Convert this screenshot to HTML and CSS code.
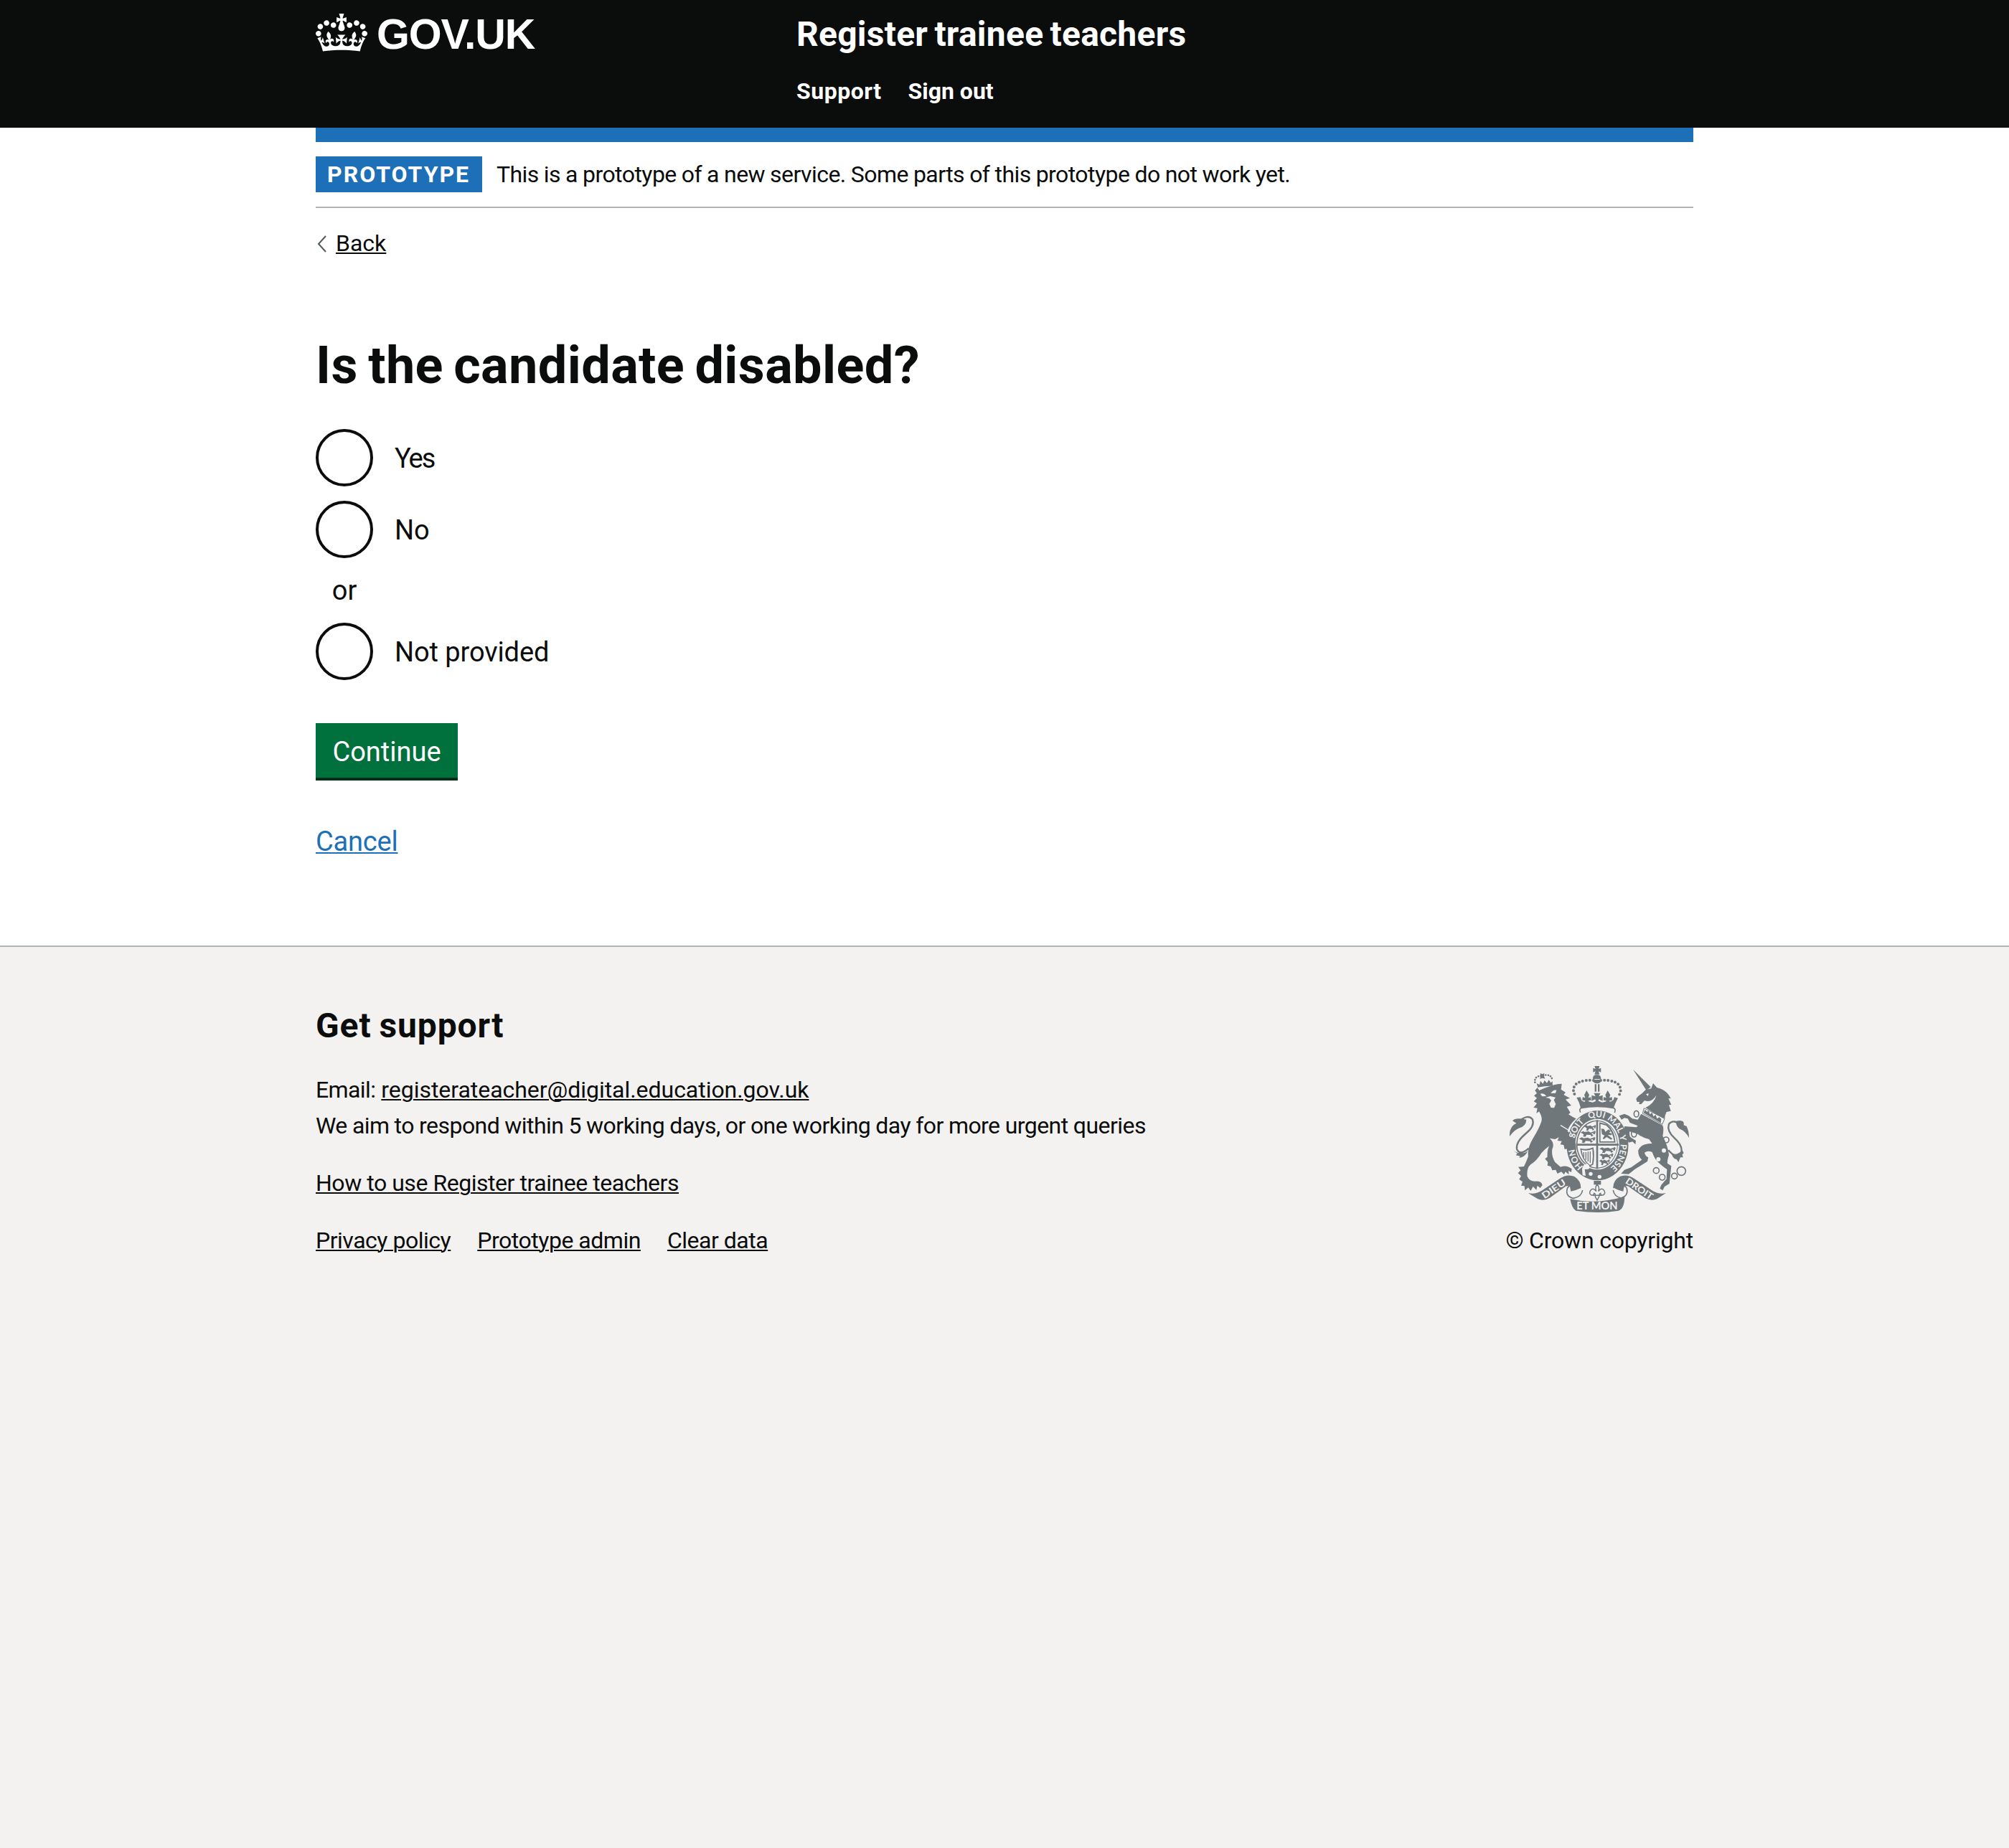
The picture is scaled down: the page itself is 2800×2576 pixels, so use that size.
FILE: index.html
```html
<!DOCTYPE html>
<html lang="en">
<head>
<meta charset="utf-8">
<title>Is the candidate disabled? - Register trainee teachers</title>
<link rel="stylesheet" href="styles.css">
</head>
<body>
<header class="header">
  <div class="container header-row">
    <a class="logo" href="#">
      <svg class="crown" viewBox="0 0 132 97" aria-hidden="true"><path fill="currentColor" d="M25 30.2c3.5 1.5 7.7-.2 9.1-3.7 1.5-3.6-.2-7.8-3.9-9.2-3.6-1.4-7.6.3-9.1 3.9-1.4 3.5.3 7.5 3.9 9zM9 39.5c3.6 1.5 7.8-.2 9.2-3.7 1.5-3.6-.2-7.8-3.9-9.1-3.6-1.5-7.6.2-9.1 3.8-1.4 3.5.3 7.5 3.8 9zM4.4 57.2c3.5 1.5 7.7-.2 9.1-3.8 1.5-3.6-.2-7.7-3.9-9.1-3.5-1.5-7.6.3-9.1 3.8-1.4 3.5.3 7.6 3.9 9.1zm38.3-21.4c3.5 1.5 7.7-.2 9.1-3.8 1.5-3.6-.2-7.7-3.9-9.1-3.6-1.5-7.6.3-9.1 3.8-1.3 3.6.4 7.7 3.9 9.1zm64.4-5.6c-3.6 1.5-7.8-.2-9.1-3.7-1.5-3.6.2-7.8 3.8-9.2 3.6-1.4 7.7.3 9.2 3.9 1.3 3.5-.4 7.5-3.9 9zm15.9 9.3c-3.6 1.5-7.7-.2-9.1-3.7-1.5-3.6.2-7.8 3.7-9.1 3.6-1.5 7.7.2 9.2 3.8 1.5 3.5-.3 7.5-3.8 9zm4.7 17.7c-3.6 1.5-7.8-.2-9.2-3.8-1.5-3.6.2-7.7 3.9-9.1 3.6-1.5 7.7.3 9.2 3.8 1.3 3.5-.4 7.6-3.9 9.1zM89.3 35.8c-3.6 1.5-7.8-.2-9.2-3.8-1.4-3.6.2-7.7 3.9-9.1 3.6-1.5 7.7.3 9.2 3.8 1.4 3.6-.3 7.7-3.9 9.1zM69.7 17.7l8.9 4.7V9.3l-8.9 2.8c-.2-.3-.5-.6-.9-.9L72.4 0H59.6l3.5 11.2c-.3.3-.6.5-.9.9l-8.8-2.8v13.1l8.8-4.7c.3.3.6.7.9.9l-5 15.4v.1c-.2.8-.4 1.6-.4 2.4 0 4.1 3.1 7.5 7 8.1h.2c.3 0 .7.1 1 .1.4 0 .7 0 1-.1h.2c4-.6 7.1-4.1 7.1-8.1 0-.8-.1-1.7-.4-2.4V34l-5.1-15.4c.4-.2.7-.6 1-.9zM66 92.8c16.9 0 32.8 1.1 47.1 3.2 4-16.9 8.9-26.7 14-33.5l-9.6-3.4c1 4.9 1.1 7.2 0 10.2-1.5-1.4-3-4.3-4.2-8.7L108.6 76c2.8-2 5-3.2 7.5-3.3-4.4 9.4-10 11.9-13.6 11.2-4.3-.8-6.3-4.6-5.6-7.9 1-4.7 5.7-5.9 8-.5 4.3-8.7-3-11.4-7.6-8.8 7.1-7.2 7.9-13.5 2.1-21.1-8 6.1-8.1 12.3-4.5 20.8-4.7-5.4-12.1-2.5-9.5 6.2 3.4-5.2 7.9-2 7.2 3.1-.6 4.3-6.4 7.8-13.5 7.2-10.3-.9-10.9-8-11.2-13.8 2.5-.5 7.1 1.8 11 7.3L80.2 60c-4.1 4.4-8 5.3-12.3 5.4 1.4-4.4 8-11.6 8-11.6H55.5s6.4 7.2 7.9 11.6c-4.2-.1-8-1-12.3-5.4l1.4 16.4c3.9-5.5 8.5-7.7 10.9-7.3-.3 5.8-.9 12.8-11.1 13.8-7.2.6-12.9-2.9-13.5-7.2-.7-5 3.8-8.3 7.1-3.1 2.7-8.7-4.6-11.6-9.4-6.2 3.7-8.5 3.6-14.7-4.6-20.8-5.8 7.6-5 13.9 2.2 21.1-4.7-2.6-11.9.1-7.7 8.8 2.3-5.5 7.1-4.2 8.1.5.7 3.3-1.3 7.1-5.7 7.9-3.5.7-9-1.8-13.5-11.2 2.5.1 4.7 1.3 7.5 3.3l-4.7-15.4c-1.2 4.4-2.7 7.2-4.3 8.7-1.1-3-.9-5.3 0-10.2l-9.5 3.4c5 6.9 9.9 16.7 14 33.5 14.8-2.1 30.8-3.2 47.7-3.2z"/></svg>
      <span class="logo-text">GOV.UK</span>
    </a>
    <div class="header-content">
      <a class="service-name" href="#">Register trainee teachers</a>
      <nav class="header-nav"><a class="nav-support" href="#">Support</a><a href="#">Sign out</a></nav>
    </div>
  </div>
</header>

<div class="container">
  <div class="blue-bar"></div>
  <div class="phase-banner">
    <strong class="tag">PROTOTYPE</strong>
    <span class="phase-text">This is a prototype of a new service. Some parts of this prototype do not work yet.</span>
  </div>
  <a class="back" href="#">
    <svg class="chevron" viewBox="0 0 16 24" aria-hidden="true"><path d="M14 1 4 12l10 11" fill="none" stroke="#505a5f" stroke-width="2"/></svg>
    <span class="back-text">Back</span>
  </a>
  <main class="main">
    <h1 class="title">Is the candidate disabled?</h1>
    <div class="radios">
      <label class="radio"><input class="radio-input" type="radio" name="disabled"><span class="label-yes">Yes</span></label>
      <label class="radio"><input class="radio-input" type="radio" name="disabled"><span>No</span></label>
      <div class="divider">or</div>
      <label class="radio"><input class="radio-input" type="radio" name="disabled"><span class="label-none">Not provided</span></label>
    </div>
    <button class="button" type="button">Continue</button>
    <p class="cancel"><a class="cancel-link" href="#">Cancel</a></p>
  </main>
</div>

<footer class="footer">
  <div class="container footer-row">
    <div class="footer-main">
      <h2 class="footer-title">Get support</h2>
      <p><span class="email-label">Email:</span> <a class="email" href="#">registerateacher@digital.education.gov.uk</a></p>
      <p class="footer-text">We aim to respond within 5 working days, or one working day for more urgent queries</p>
      <p class="footer-guide footer-gap"><a href="#">How to use Register trainee teachers</a></p>
      <div class="footer-links footer-gap"><a href="#">Privacy policy</a><a href="#">Prototype admin</a><a href="#">Clear data</a></div>
    </div>
    <div class="footer-meta">
      <svg class="crest" viewBox="72 48 750 612" aria-hidden="true">
        <defs>
          <path id="garter" d="M439 492A97 115 0 0 1 439 262A97 115 0 0 1 439 492"/>
          <path id="lion-passant" d="M0 8l9-6 5 4 12-3 7 5 9-4 1 5-8 3 7 8-7 5-2-7-13-1-4 9-8-2 3-7-4-5zM44 0l5 4-3 12-5-2z"/>
        </defs>
        <g class="ink">
          <!-- imperial crown -->
          <path d="M427 48h21l-4 12 10-4v18l-10-4 4 13h-21l4-13-10 4V56l10 4zM437 85c12 0 17 5 17 17h-34c0-12 5-17 17-17zM418 105h39c-2 10-9 16-19 16s-18-6-20-16zM428 124h7v31h-7zM441 124h7v31h-7zM424 161h28l-7 14 16-5v24l-16-7-4 14h-7l-4-14-15 7v-24l16 5z"/>
          <path d="M394 150l11 19-4 12 11-3 1 13-12 2 4 9h-20l3-9-12-2 1-13 11 3-4-12zM482 150l11 19-4 12 11-3 1 13-12 2 4 9h-20l3-9-12-2 1-13 11 3-4-12z"/>
          <path d="M352 180l16-2 5 14q12 10 28 4l18 4 20-8 20 8 18-4q17 6 29-6l4-12 15 4q-11 19-18 41-68-12-138 0-6-25-17-43z"/>
          <path d="M423 108c-45-3-86 7-84 44q2 15 13 24M453 108c45-3 84 7 83 44q-2 15-13 24" fill="none" stroke="#6f777b" stroke-width="12" stroke-linecap="round" stroke-dasharray="0 15.2"/>
          <path d="M368 242q-7-16 5-19 66-12 132 0 13 3 6 20" fill="none" stroke="#6f777b" stroke-width="5"/>
          <!-- garter and quartered shield -->
          <path fill-rule="evenodd" d="M440 234a129 146 0 1 1-1 0zM438 269a92 106 0 1 0 1 0z"/>
          <path fill-rule="evenodd" d="M438 275a87 101 0 1 1-1 0zM438 279a83 97 0 1 0 1 0z"/>
          <path d="M434 274h8v204h-8zM350 373h178v8H350z"/>
          <use href="#lion-passant" transform="translate(384 293)"/><use href="#lion-passant" transform="translate(368 318) scale(1.3 1)"/><use href="#lion-passant" transform="translate(362 344) scale(1.4 1)"/>
          <use href="#lion-passant" transform="translate(447 386) scale(1.4 1)"/><use href="#lion-passant" transform="translate(447 412) scale(1.2 1)"/><use href="#lion-passant" transform="translate(447 437) scale(.9 1)"/>
          <path fill-rule="evenodd" d="M447 283l33 9q31 24 35 76h-68zm5 7v73h57q-6-43-33-66z"/>
          <path d="M455 310l12 1 5 12 14-10 9 8-7 5 12 5-2 6-16-1 20 16-6 4-18-11-12 9-5-3 8-13-11-5z"/>
          <path fill-rule="evenodd" d="M367 392q30 8 55-4 7 30 0 72l-13 8q-38-28-42-76zm6 6q5 40 35 64l9-5q5-30 1-62-24 10-45 3z"/>
          <path d="M382 408v20M391 408v32M400 406v41M409 405v48" stroke="#6f777b" stroke-width="4"/>
          <!-- pendant -->
          <path d="M424 528h30v16h-30z"/>
          <path d="M438 543q12 13 5 29 14-19 25-2 6 14-6 18-9 2-10-8-7 3-6 14l-8 15-8-15q2-12-5-14-2 10-11 8-11-5-5-18 11-17 25 2-6-17 4-29zM420 589h36" fill="none" stroke="#6f777b" stroke-width="4.5"/>
          <!-- motto ribbons -->
          <path d="M149 579Q178 586 205 570L278 521Q312 497 343 510Q371 528 370 558Q350 568 328 572L324 552Q312 545 300 556L240 599Q215 614 190 604z"/>
          <path d="M726 579Q697 586 670 570L597 521Q563 497 533 510Q505 526 505 555Q523 568 547 572L551 552Q563 545 575 556L640 601Q665 614 688 604z"/>
          <path d="M325 604q108 25 228-11-1 52-26 60-82 14-178 0-17-10-24-49z"/>
          <path d="M369 557q-46-21-56 3-9 34 26 41 34-6 38-34M505 557q46-21 57 3 8 29-23 40-30-6-34-33" fill="none" stroke="#6f777b" stroke-width="5"/>
          <!-- lion -->
          <path d="M188 138L196 150Q240 130 272 124L290 122L287 146L306 158L298 168L324 182L306 188L330 213L311 218L326 243L318 250Q336 262 350 268Q320 295 314 320L338 345Q352 375 350 400L338 410L318 405L312 398L322 392L302 396L298 378L284 376L290 362L272 360L278 346L262 354L240 350Q262 372 250 396Q246 425 262 450L285 470Q310 460 332 478L330 492L318 486L320 502L305 490L300 502L288 490L272 498L265 482L250 484L244 468L230 464L232 450L220 436L230 428Q228 400 238 382Q220 395 205 412Q185 445 160 460Q142 475 146 510Q155 530 178 530Q205 528 209 546L200 558L188 548L184 566L170 552L160 570L150 556L136 568L134 550L120 548L126 532L112 522L120 508L107 496L118 484L108 470L132 468Q145 440 150 425Q145 390 170 350Q195 310 205 280Q210 262 195 238L184 246L188 224L172 222L186 204L173 196L186 182L174 172L186 162L178 150z"/>
          <path d="M190 137l-5-17 12 6 4-16 10 12 7-14 10 11 8-13 8 12 7-6 1 19q-30-1-62 6z"/>
          <path d="M178 116q-4-26 28-27 38-12 44 15" fill="none" stroke="#6f777b" stroke-width="8" stroke-linecap="round" stroke-dasharray="0 10.5"/>
          <path d="M200 78l9 4 8-4-1 13 4 10-11-3-10 4 2-11z"/>
          <path d="M104 284Q150 245 168 272Q178 300 140 330Q98 365 102 395Q115 425 152 392" fill="none" stroke="#6f777b" stroke-width="7"/>
          <path d="M72 342Q70 300 100 287L84 277Q95 262 142 272Q142 300 110 308Q88 318 72 342zM88 402Q110 416 118 408Q135 418 150 400Q137 430 112 432L116 425L98 421L104 413z"/>
          <!-- unicorn -->
          <path d="M588 62L662 136L644 150z"/>
          <path d="M601 186Q604 176 626 162L640 148L664 142L672 120L688 138Q730 148 746 184L736 183L748 210L738 211L746 236L728 240Q720 254 720 272L640 222Q676 205 686 170Q664 204 636 192L622 208L612 206L616 198L605 198z"/>
          <path d="M622 248L712 296Q718 312 712 340Q735 385 738 420Q730 445 732 455L748 466L744 505L740 540L720 552L712 568L700 560L706 545L728 520L730 480Q700 460 682 438Q672 420 668 408Q650 400 636 410Q640 425 652 430L648 447L595 480L570 500L538 498L552 482L580 472L625 440Q608 425 610 400Q620 372 668 372L655 354Q630 350 608 332L574 322Q570 340 580 347L600 360L598 376L586 364L570 368Q550 335 552 300L602 304L608 298L575 285L566 268L552 265L540 272L530 256L552 248L570 256L585 268L608 272z"/>
          <path d="M790 300Q760 266 738 290Q728 320 762 350Q800 385 788 415Q770 440 736 400" fill="none" stroke="#6f777b" stroke-width="7"/>
          <path d="M768 278Q805 270 800 295L812 300Q822 320 822 348Q805 318 785 312Q766 300 768 278zM750 412Q770 425 794 400L800 412L794 418L797 430L786 430L778 450L770 438Q752 436 750 412z"/>
          <g class="chain"><ellipse cx="602" cy="248" rx="10" ry="13"/><ellipse cx="592" cy="331" rx="11" ry="14"/><circle cx="726" cy="357" r="12"/><circle cx="685" cy="485" r="12"/><circle cx="710" cy="513" r="12"/><circle cx="761" cy="508" r="12"/><circle cx="790" cy="487" r="18"/></g>
        </g>
        <g class="paper">
          <path d="M200 164q16-4 25 10l-17 1zM244 162q11-16 24-13l-4 12zM222 180l20-6 22 5-7 11 8 17-7 16-13-1-7-16 8-14-8-9zM642 166l11-4-2 12zM375 481q1-23 22-25 16 14 5 23l-16 1 4 27-13-2z"/>
          <circle cx="411" cy="499" r="8"/><circle cx="448" cy="511" r="8"/><circle cx="717" cy="401" r="9"/><circle cx="694" cy="438" r="9"/>
        </g>
        <path d="M628 246L634 224L720 268L710 292z" fill="#f3f2f1" stroke="#6f777b" stroke-width="3"/>
        <path class="ink" d="M632 244l6-14 8 9 8-4 4 15 10-7 5 16 10-7 5 16 10-6 8 8-2 16z"/>
        <path d="M285 296l37 22 18 30" fill="none" stroke="#f3f2f1" stroke-width="4"/>
        <g class="motto">
          <text><textPath href="#garter" startOffset="16%">HON</textPath></text>
          <text><textPath href="#garter" startOffset="35%">SOIT</textPath></text>
          <text><textPath href="#garter" startOffset="49.5%">QUI</textPath></text>
          <text><textPath href="#garter" startOffset="62%">MAL</textPath></text>
          <text><textPath href="#garter" startOffset="71%">Y</textPath></text>
          <text><textPath href="#garter" startOffset="83%">PENSE</textPath></text>
          <text class="ribbon-text" transform="translate(264 573) rotate(-34)" textLength="112" lengthAdjust="spacingAndGlyphs">DIEU</text>
          <text class="ribbon-text" transform="translate(607 572) rotate(34)" textLength="130" lengthAdjust="spacingAndGlyphs">DROIT</text>
          <text class="ribbon-mid" x="438" y="649" textLength="172" lengthAdjust="spacingAndGlyphs">ET MON</text>
        </g>
      </svg>
      <a class="copyright" href="#">© Crown copyright</a>
    </div>
  </div>
</footer>
</body>
</html>
```
FILE: styles.css
```css
* { box-sizing: border-box; }
html { background: #f3f2f1; }
body {
  margin: 0;
  background: #fff;
  color: #0b0c0c;
  font: 32px/50px Roboto, "Liberation Sans", sans-serif;
}
a { color: inherit; text-decoration-thickness: 2px; text-underline-offset: 2px; }
h1, h2, p { margin: 0; }
.container { width: 1920px; margin: 0 auto; }

.header { height: 178px; background: #0b0c0c; color: #fff; }
.header a { text-decoration: none; }
.header-row { display: flex; }
.logo { display: flex; width: 670px; padding-top: 19px; }
.crown { width: 72px; height: 53px; }
.logo-text {
  margin-left: 13px;
  font: bold 59px/58px "Liberation Sans", Arial, sans-serif;
  letter-spacing: -1.2px;
}
.header-content { display: flex; flex-direction: column; padding-top: 20px; }
.service-name {
  font-size: 48px;
  line-height: 56px;
  font-weight: 700;
  letter-spacing: 0.25px;
  word-spacing: -3px;
}
.header-nav { display: flex; gap: 37px; margin-top: 31px; line-height: 40px; font-weight: 700; }
.nav-support { letter-spacing: 0.5px; }

.blue-bar { height: 20px; background: #1d70b8; }
.phase-banner { display: flex; gap: 20px; padding: 20px 0; border-bottom: 2px solid #b1b4b6; }
.tag { width: 232px; padding-left: 16px; background: #1d70b8; color: #fff; letter-spacing: 2px; }
.phase-text { letter-spacing: -0.56px; word-spacing: -0.3px; }
.back { display: flex; width: max-content; margin-top: 29px; line-height: 40px; text-decoration: none; }
.chevron { width: 16px; height: 24px; margin: 9px 12px 0 0; }
.back-text { text-decoration: underline; text-decoration-thickness: 2px; text-underline-offset: 2px; }

.main { height: 959px; padding-top: 111px; font-size: 38px; }
.title { font-size: 72px; line-height: 80px; font-weight: 700; letter-spacing: 0.4px; word-spacing: -4px; }
.radios { display: flex; flex-direction: column; gap: 20px; margin-top: 48px; }
.radio { display: flex; gap: 30px; height: 80px; line-height: 83px; }
.radio-input {
  appearance: none;
  width: 80px;
  height: 80px;
  margin: 0;
  border: 4px solid #0b0c0c;
  border-radius: 50%;
  background: #fff;
}
.label-yes { letter-spacing: -2px; }
.label-none { letter-spacing: -0.1px; }
.divider { width: 80px; text-align: center; }
.button {
  display: block;
  width: 198px;
  height: 76px;
  margin-top: 60px;
  padding: 3px 0 0;
  border: 0;
  background: #00703c;
  box-shadow: 0 4px 0 #002d18;
  color: #fff;
  font: inherit;
}
.cancel { margin-top: 64px; }
.cancel-link { color: #1d70b8; letter-spacing: -0.2px; }

.footer { height: 1258px; padding-top: 80px; border-top: 2px solid #b1b4b6; background: #f3f2f1; }
.footer-row { display: flex; justify-content: space-between; align-items: flex-end; }
.footer-title { font-size: 48px; line-height: 60px; margin-bottom: 34px; letter-spacing: 0.9px; word-spacing: -2px; }
.email-label { letter-spacing: -0.6px; }
.email { letter-spacing: -0.04px; }
.footer-text { letter-spacing: -0.54px; word-spacing: -0.3px; }
.footer-guide { letter-spacing: -0.46px; }
.footer-gap { margin-top: 30px; }
.footer-links { display: flex; gap: 37px; letter-spacing: -0.48px; }
.footer-meta { display: flex; flex-direction: column; align-items: flex-end; }
.crest { width: 250px; height: 204px; margin: 0 6px 14px 0; }
.copyright { text-decoration: none; letter-spacing: -0.2px; }

.ink { fill: #6f777b; }
.paper { fill: #f3f2f1; }
.chain { fill: none; stroke: #6f777b; stroke-width: 5; }
.motto {
  fill: #f3f2f1;
  font: bold 36px Lato, sans-serif;
  text-anchor: middle;
}
.ribbon-text { font-size: 38px; }
.ribbon-mid { font-size: 44px; }
```
